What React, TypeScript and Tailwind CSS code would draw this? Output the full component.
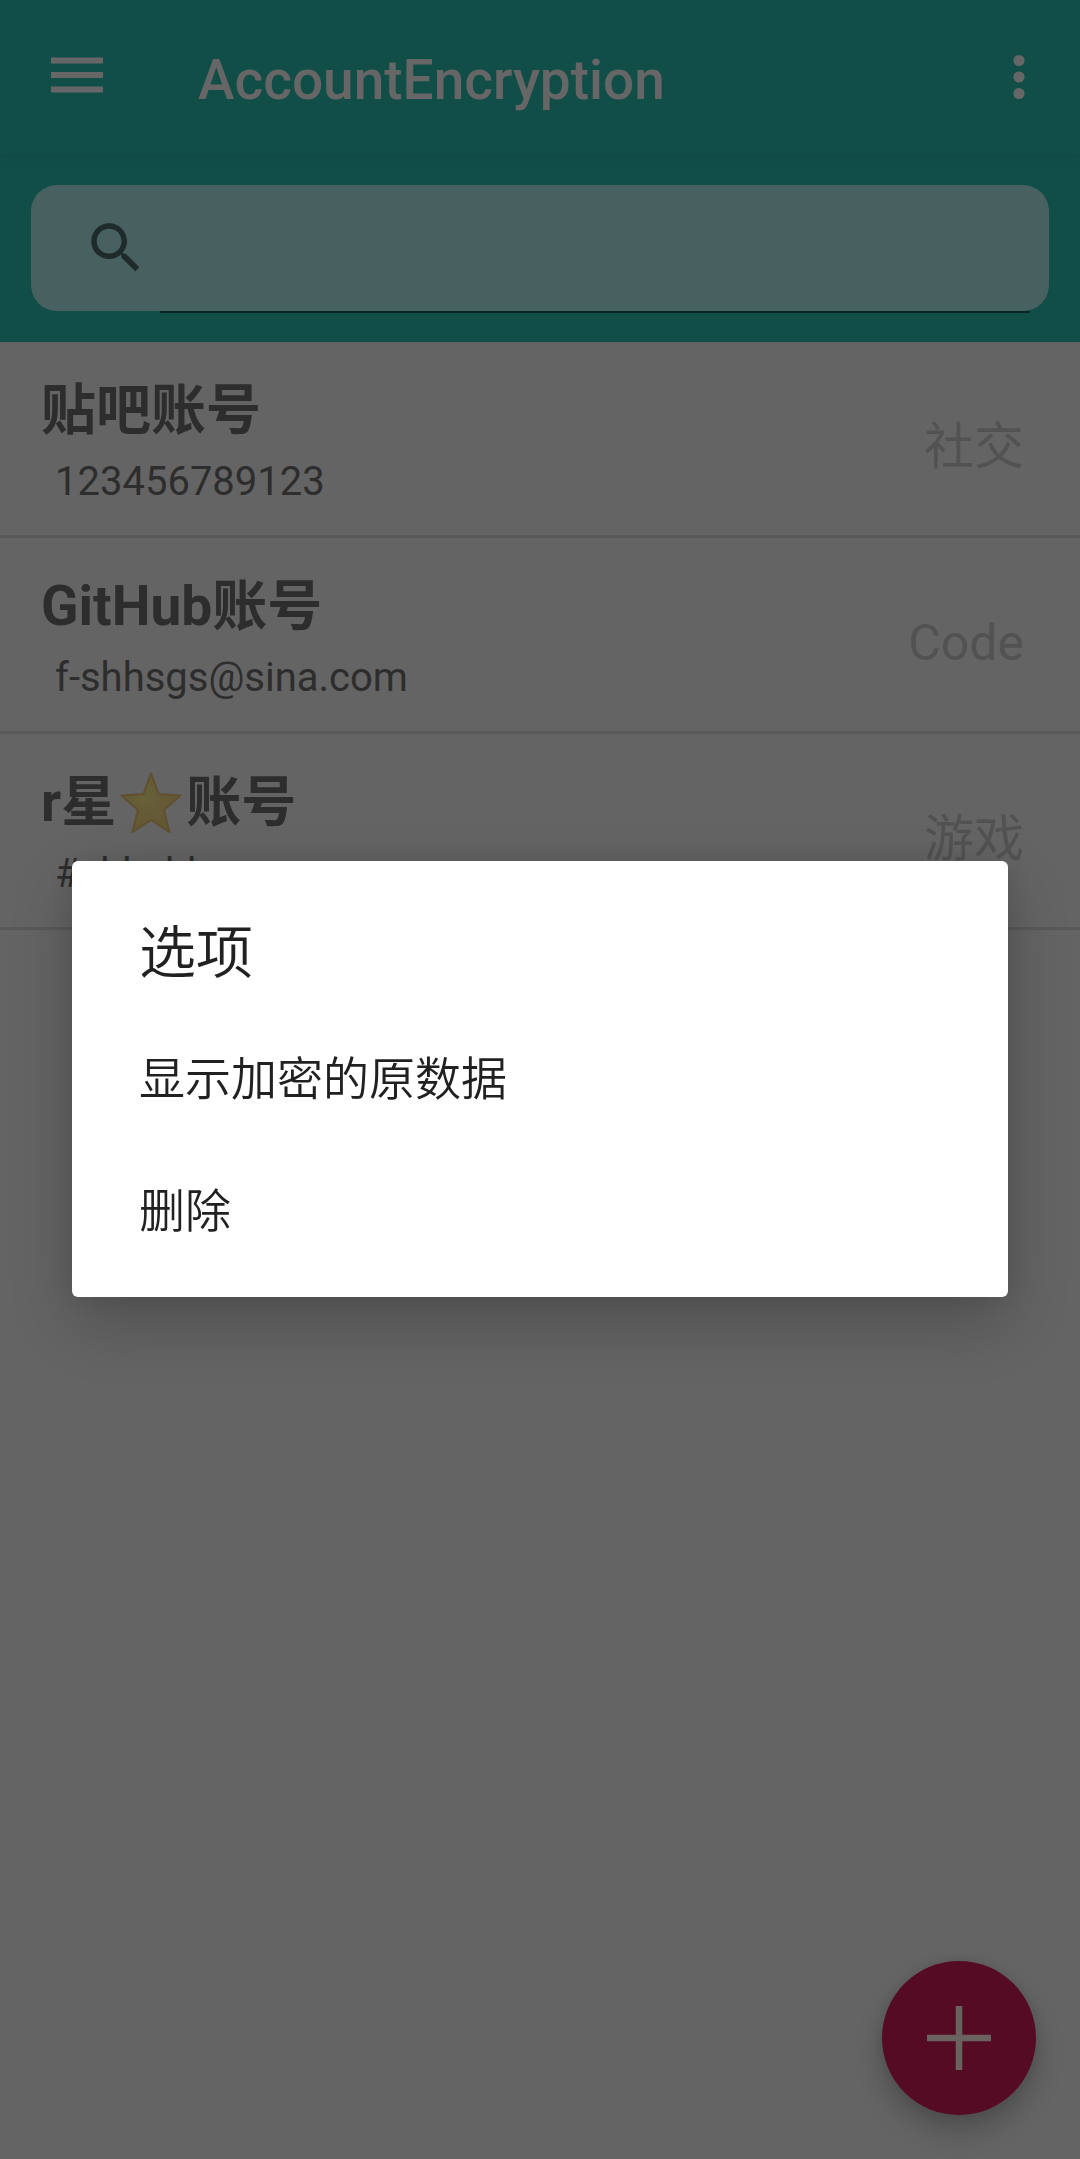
import React from "react";

type Account = { title: React.ReactNode; user: string; category: string };

function Star() {
  return (
    <svg viewBox="0 0 62 62" className="mx-1 inline-block size-[62px] align-[-12px]" role="img" aria-label="⭐">
      <defs>
        <radialGradient id="star-fill" cx="40%" cy="40%" r="60%">
          <stop offset="0" stopColor="#666038" />
          <stop offset="1" stopColor="#635734" />
        </radialGradient>
      </defs>
      <path
        d="M31 2 L38.5 23 L60.5 24.5 L44 39 L49.5 61 L31 49 L12.5 61 L18 39 L1.5 24.5 L23.5 23 Z"
        fill="url(#star-fill)"
        stroke="#60502f"
        strokeWidth="2"
        strokeLinejoin="round"
      />
    </svg>
  );
}

const accounts: Account[] = [
  { title: "贴吧账号", user: "123456789123", category: "社交" },
  { title: "GitHub账号", user: "f-shhsgs@sina.com", category: "Code" },
  { title: <>r星<Star />账号</>, user: "#shhshh", category: "游戏" },
];

const options = ["显示加密的原数据", "删除"];

function TopBar() {
  return (
    <header className="relative flex h-[154px] items-center bg-[#124e48] pr-6 pl-11 text-[#666666] shadow-[0_2px_12px_rgba(0,0,0,0.08)]">
      <button type="button" aria-label="Menu" className="mb-1 size-[66px]">
        <svg viewBox="0 0 66 66" className="size-full" fill="currentColor">
          <path d="M7 15.5h52v6H7zM7 30h52v6H7zM7 44.5h52v6H7z" />
        </svg>
      </button>
      <h1 className="ml-[88px] flex-1 pt-1.5 text-[55px] leading-[66px] font-medium">AccountEncryption</h1>
      <button type="button" aria-label="More options" className="size-[74px]">
        <svg viewBox="0 0 74 74" className="size-full" fill="currentColor">
          <circle cx="37" cy="20.5" r="5.6" />
          <circle cx="37" cy="37" r="5.6" />
          <circle cx="37" cy="53.5" r="5.6" />
        </svg>
      </button>
    </header>
  );
}

function SearchBar() {
  return (
    <div className="bg-[#124e48] p-[31px]">
      <label className="flex h-[126px] items-start rounded-[26px] bg-[#476060] pr-[19px] pl-[52px]">
        <svg viewBox="0 0 24 24" className="mt-[30px] size-[66px] shrink-0" fill="#1f2b2a" aria-hidden="true">
          <path d="M15.5 14h-.79l-.28-.27C15.41 12.59 16 11.11 16 9.5 16 5.91 13.09 3 9.5 3S3 5.91 3 9.5 5.91 16 9.5 16c1.61 0 3.09-.59 4.23-1.57l.27.28v.79l5 4.99L20.49 19l-4.99-5zm-6 0C7.01 14 5 11.99 5 9.5S7.01 5 9.5 5 14 7.01 14 9.5 11.99 14 9.5 14z" />
        </svg>
        <input
          type="text"
          aria-label="Search"
          className="ml-[11px] h-32 min-w-0 flex-1 border-b-2 border-[#0a2725] bg-transparent text-[50px] text-[#1f2b2a] outline-none"
        />
      </label>
    </div>
  );
}

function OptionsDialog() {
  return (
    <div className="fixed inset-0 flex items-center justify-center px-[72px] pb-px">
      <div
        role="dialog"
        aria-labelledby="options-title"
        className="w-full rounded-md bg-white pt-[52px] pb-5 font-[350] text-[#212121] shadow-[0_26px_64px_rgba(0,0,0,0.2),0_0_30px_rgba(0,0,0,0.1)]"
      >
        <h2 id="options-title" className="px-[67px] pb-[18px] text-[57px] leading-[82px]">选项</h2>
        {options.map((option) => (
          <button key={option} type="button" className="block h-[132px] w-full px-[67px] text-left text-[46px] leading-[66px]">
            {option}
          </button>
        ))}
      </div>
    </div>
  );
}

export default function App() {
  return (
    <div className="min-h-screen bg-[#646464] font-[Roboto,'Noto_Sans_CJK_SC',sans-serif]">
      <TopBar />
      <SearchBar />
      <ul>
        {accounts.map((account) => (
          <li key={account.user} className="flex h-[196px] items-center justify-between border-b-[3px] border-[#595959] pr-14 pl-[41px]">
            <div className="pt-3.5 text-[#2d2d2d]">
              <p className="text-[55px] leading-[72px] font-bold">{account.title}</p>
              <p className="pl-3.5 text-[40px] leading-[72px]">{account.user}</p>
            </div>
            <span className="pt-4 text-[50px] leading-[72px] text-[#525252]">{account.category}</span>
          </li>
        ))}
      </ul>
      <button
        type="button"
        aria-label="Add account"
        className="fixed right-11 bottom-11 flex size-[154px] items-center justify-center rounded-full bg-[#560b25] shadow-[0_16px_28px_rgba(0,0,0,0.22),0_0_14px_rgba(0,0,0,0.1)]"
      >
        <svg viewBox="0 0 64 64" className="size-16" fill="none" stroke="#69625f" strokeWidth="6.5">
          <path d="M32 0v64M0 32h64" />
        </svg>
      </button>
      <OptionsDialog />
    </div>
  );
}
